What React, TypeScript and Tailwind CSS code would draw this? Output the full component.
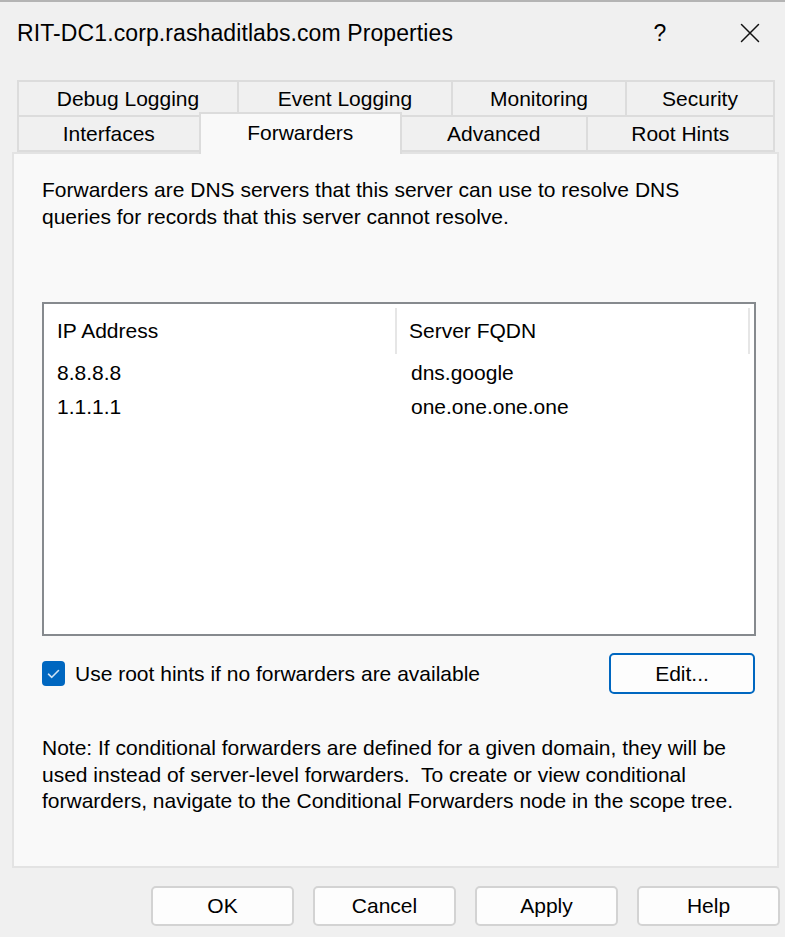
const font = { fontFamily: '"Liberation Sans", Arial, sans-serif' };

function Tab({ label, className }: { label: string; className: string }) {
  return (
    <div className={`flex items-center justify-center border-2 border-[#dcdcdc] bg-[#f0f0f0] text-[21px] text-black -ml-[2px] first:ml-0 ${className}`}>
      {label}
    </div>
  );
}

function DialogButton({ label }: { label: string }) {
  return (
    <button className="w-[143px] h-[40px] rounded-[5px] border-2 border-[#d3d3d3] bg-[#fdfdfd] text-[21px] text-black">
      {label}
    </button>
  );
}

export default function App() {
  const forwarders = [
    { ip: "8.8.8.8", fqdn: "dns.google" },
    { ip: "1.1.1.1", fqdn: "one.one.one.one" },
  ];

  return (
    <div style={font} className="w-[785px] h-[937px] bg-[#f0f0f0] border-t-2 border-[#b4b4b4] flex flex-col overflow-hidden text-black">
      {/* title bar */}
      <div className="h-[62px] flex items-center pl-[17px]">
        <span className="flex-1 text-[23px] tracking-[0.1px]">RIT-DC1.corp.rashaditlabs.com Properties</span>
        <span className="w-[30px] text-center mr-[65px] text-[23px] font-light">?</span>
        <svg width="20" height="20" viewBox="0 0 20 20" className="mr-[25px]">
          <path d="M1.5 1.5 L18.5 18.5 M18.5 1.5 L1.5 18.5" stroke="#111" strokeWidth="1.5" strokeLinecap="round" />
        </svg>
      </div>

      {/* tabs */}
      <div className="mt-[16px] pl-[17px] pr-[10px] flex flex-col">
        <div className="flex h-[37px]">
          <Tab label="Debug Logging" className="w-[222px]" />
          <Tab label="Event Logging" className="w-[216px]" />
          <Tab label="Monitoring" className="w-[176px]" />
          <Tab label="Security" className="w-[150px]" />
        </div>
        <div className="flex h-[37px] -mt-[2px] items-end">
          <Tab label="Interfaces" className="w-[184px] h-[37px]" />
          <div className="relative z-10 -ml-[2px] w-[204px] h-[42px] -mb-[2px] flex items-start justify-center pt-[3px] bg-[#f9f9f9] border-2 border-b-0 border-[#dcdcdc] text-[21px]">
            Forwarders
          </div>
          <Tab label="Advanced" className="w-[188px] h-[37px]" />
          <Tab label="Root Hints" className="w-[190px] h-[37px]" />
        </div>
      </div>

      {/* page */}
      <div className="ml-[12px] w-[767px] h-[716px] bg-[#f9f9f9] border-2 border-[#e3e3e3] pl-[28px] pt-[22px] flex flex-col text-[21px]">
        <p className="leading-[27px] w-[700px]">
          Forwarders are DNS servers that this server can use to resolve DNS queries for records that this server cannot resolve.
        </p>

        <div className="mt-[72px] w-[714px] h-[334px] border-2 border-[#868a8e] bg-white flex flex-col">
          <div className="flex h-[52px] pt-[2px]">
            <div className="w-[353px] pl-[13px] flex items-center border-r-2 border-[#e6e6e6] my-[2px]">IP Address</div>
            <div className="w-[353px] pl-[12px] flex items-center border-r-2 border-[#e6e6e6] my-[2px]">Server FQDN</div>
          </div>
          {forwarders.map((f) => (
            <div key={f.ip} className="flex h-[34px] items-center">
              <div className="w-[355px] pl-[13px]">{f.ip}</div>
              <div className="pl-[12px]">{f.fqdn}</div>
            </div>
          ))}
        </div>

        <div className="mt-[17px] flex items-center w-[714px]">
          <div className="w-[23px] h-[25px] rounded-[4px] bg-[#0067c0] flex items-center justify-center">
            <svg width="13" height="10" viewBox="0 0 13 10" fill="none">
              <path d="M1.5 5.2 L4.8 8.3 L11.5 1.5" stroke="#cfe3f5" strokeWidth="1.6" strokeLinecap="round" strokeLinejoin="round" />
            </svg>
          </div>
          <span className="ml-[10px] flex-1">Use root hints if no forwarders are available</span>
          <button className="w-[146px] h-[41px] rounded-[5px] border-2 border-[#0067c0] bg-[#fdfdfd] text-[21px] mr-[1px]">
            Edit...
          </button>
        </div>

        <p className="mt-[41px] leading-[26.5px] w-[720px]">
          Note: If conditional forwarders are defined for a given domain, they will be used instead of server-level forwarders.&nbsp; To create or view conditional forwarders, navigate to the Conditional Forwarders node in the scope tree.
        </p>
      </div>

      {/* footer buttons */}
      <div className="mt-[18px] flex justify-end gap-[19px] pr-[5px]">
        <DialogButton label="OK" />
        <DialogButton label="Cancel" />
        <DialogButton label="Apply" />
        <DialogButton label="Help" />
      </div>
    </div>
  );
}
